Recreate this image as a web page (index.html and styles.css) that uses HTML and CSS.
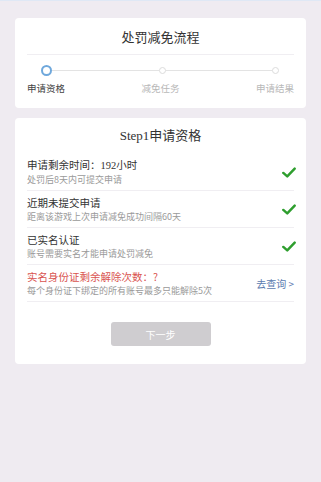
FILE: index.html
```html
<!DOCTYPE html>
<html lang="zh-CN">
<head>
  <meta charset="UTF-8" />
  <meta name="viewport" content="width=device-width, initial-scale=1.0"/>
  <title>处罚减免流程</title>
  <link rel="stylesheet" href="styles.css">
</head>
<body>

  <!-- Progress card -->
  <div class="card flow-card">
    <div class="card-title">处罚减免流程</div>
    <div class="steps">
      <div class="step-track">
        <span class="dot active"></span>
        <span class="track-line"></span>
        <span class="dot"></span>
        <span class="track-line"></span>
        <span class="dot"></span>
      </div>
      <div class="step-labels">
        <span class="current">申请资格</span>
        <span>减免任务</span>
        <span>申请结果</span>
      </div>
    </div>
  </div>

  <!-- Eligibility card -->
  <div class="card check-card">
    <div class="check-title">Step1申请资格</div>

    <div class="check-row">
      <div class="row-text">
        <p class="row-main">申请剩余时间：<span class="num">192</span>小时</p>
        <p class="row-sub">处罚后8天内可提交申请</p>
      </div>
      <svg class="tick" viewBox="0 0 16 12" width="14" height="11">
        <path d="M1.5 6.5 L6 10.5 L14.5 1.5" fill="none" stroke="#2e9e2e" stroke-width="2.8" stroke-linecap="round" stroke-linejoin="round"/>
      </svg>
    </div>

    <div class="check-row">
      <div class="row-text">
        <p class="row-main">近期未提交申请</p>
        <p class="row-sub">距离该游戏上次申请减免成功间隔60天</p>
      </div>
      <svg class="tick" viewBox="0 0 16 12" width="14" height="11">
        <path d="M1.5 6.5 L6 10.5 L14.5 1.5" fill="none" stroke="#2e9e2e" stroke-width="2.8" stroke-linecap="round" stroke-linejoin="round"/>
      </svg>
    </div>

    <div class="check-row">
      <div class="row-text">
        <p class="row-main">已实名认证</p>
        <p class="row-sub">账号需要实名才能申请处罚减免</p>
      </div>
      <svg class="tick" viewBox="0 0 16 12" width="14" height="11">
        <path d="M1.5 6.5 L6 10.5 L14.5 1.5" fill="none" stroke="#2e9e2e" stroke-width="2.8" stroke-linecap="round" stroke-linejoin="round"/>
      </svg>
    </div>

    <div class="check-row">
      <div class="row-text">
        <p class="row-main warn">实名身份证剩余解除次数：?</p>
        <p class="row-sub">每个身份证下绑定的所有账号最多只能解除5次</p>
      </div>
      <a class="query-link" href="#">去查询 &gt;</a>
    </div>

    <div class="btn-wrap">
      <button class="next-btn" disabled>下一步</button>
    </div>
  </div>

</body>
</html>
```

FILE: styles.css
```css
html, body {
  margin: 0;
  padding: 0;
}

body {
  background: #efebf1;
  border-top: 1px solid #dfe8f5;
  min-height: 481px;
  padding: 17px 15px 0;
  box-sizing: border-box;
  font-family: "Noto Sans CJK SC", "Noto Sans", sans-serif;
  color: #333;
}

.card {
  background: #fff;
  border-radius: 4px;
  padding: 0 12px;
}

.card-title {
  text-align: center;
  font-size: 13px;
  line-height: 18px;
  padding: 10px 0 8px;
  border-bottom: 1px solid #f0eef2;
  color: #333;
}

/* steps */
.steps {
  padding: 10px 0 13px;
}

.step-track {
  display: flex;
  align-items: center;
  padding: 0 15px 0 14px;
}

.dot {
  width: 5px;
  height: 5px;
  border-radius: 50%;
  border: 1px solid #dcdcdc;
  background: #fff;
  flex: none;
}

.dot.active {
  width: 7px;
  height: 7px;
  border: 2px solid #6fa8dc;
}

.track-line {
  flex: 1;
  height: 1px;
  background: #e3e3e3;
}

.step-labels {
  display: flex;
  justify-content: space-between;
  font-size: 9.5px;
  line-height: 14px;
  margin-top: 5px;
  color: #b8b8b8;
}

.step-labels .current {
  color: #444;
}

/* eligibility */
.check-card {
  margin-top: 10px;
  padding-bottom: 18px;
}

.check-title {
  text-align: center;
  font-family: "Liberation Serif", "Noto Sans CJK SC", serif;
  font-size: 13px;
  line-height: 18px;
  padding: 9px 0 8px;
}

.check-row {
  display: flex;
  align-items: center;
  justify-content: space-between;
  border-bottom: 1px solid #f0eef2;
  padding: 4px 0 3px;
}

.row-text p {
  margin: 0;
}

.row-main {
  font-size: 10.5px;
  line-height: 15px;
  color: #333;
}

.row-main .num {
  font-family: "Liberation Serif", serif;
}

.row-main.warn {
  color: #d9534f;
}

.row-sub {
  font-size: 9px;
  line-height: 14px;
  color: #9a9a9a;
}

.tick {
  margin-right: -2px;
  flex: none;
}

.query-link {
  font-size: 10px;
  color: #5b7bb0;
  text-decoration: none;
  margin-right: 0;
}

.btn-wrap {
  display: flex;
  justify-content: center;
  padding-top: 20px;
}

.next-btn {
  width: 100px;
  height: 24px;
  border: none;
  border-radius: 3px;
  background: #cfcdd0;
  color: #fff;
  font-size: 10px;
  font-family: "Noto Sans CJK SC", sans-serif;
}
```
